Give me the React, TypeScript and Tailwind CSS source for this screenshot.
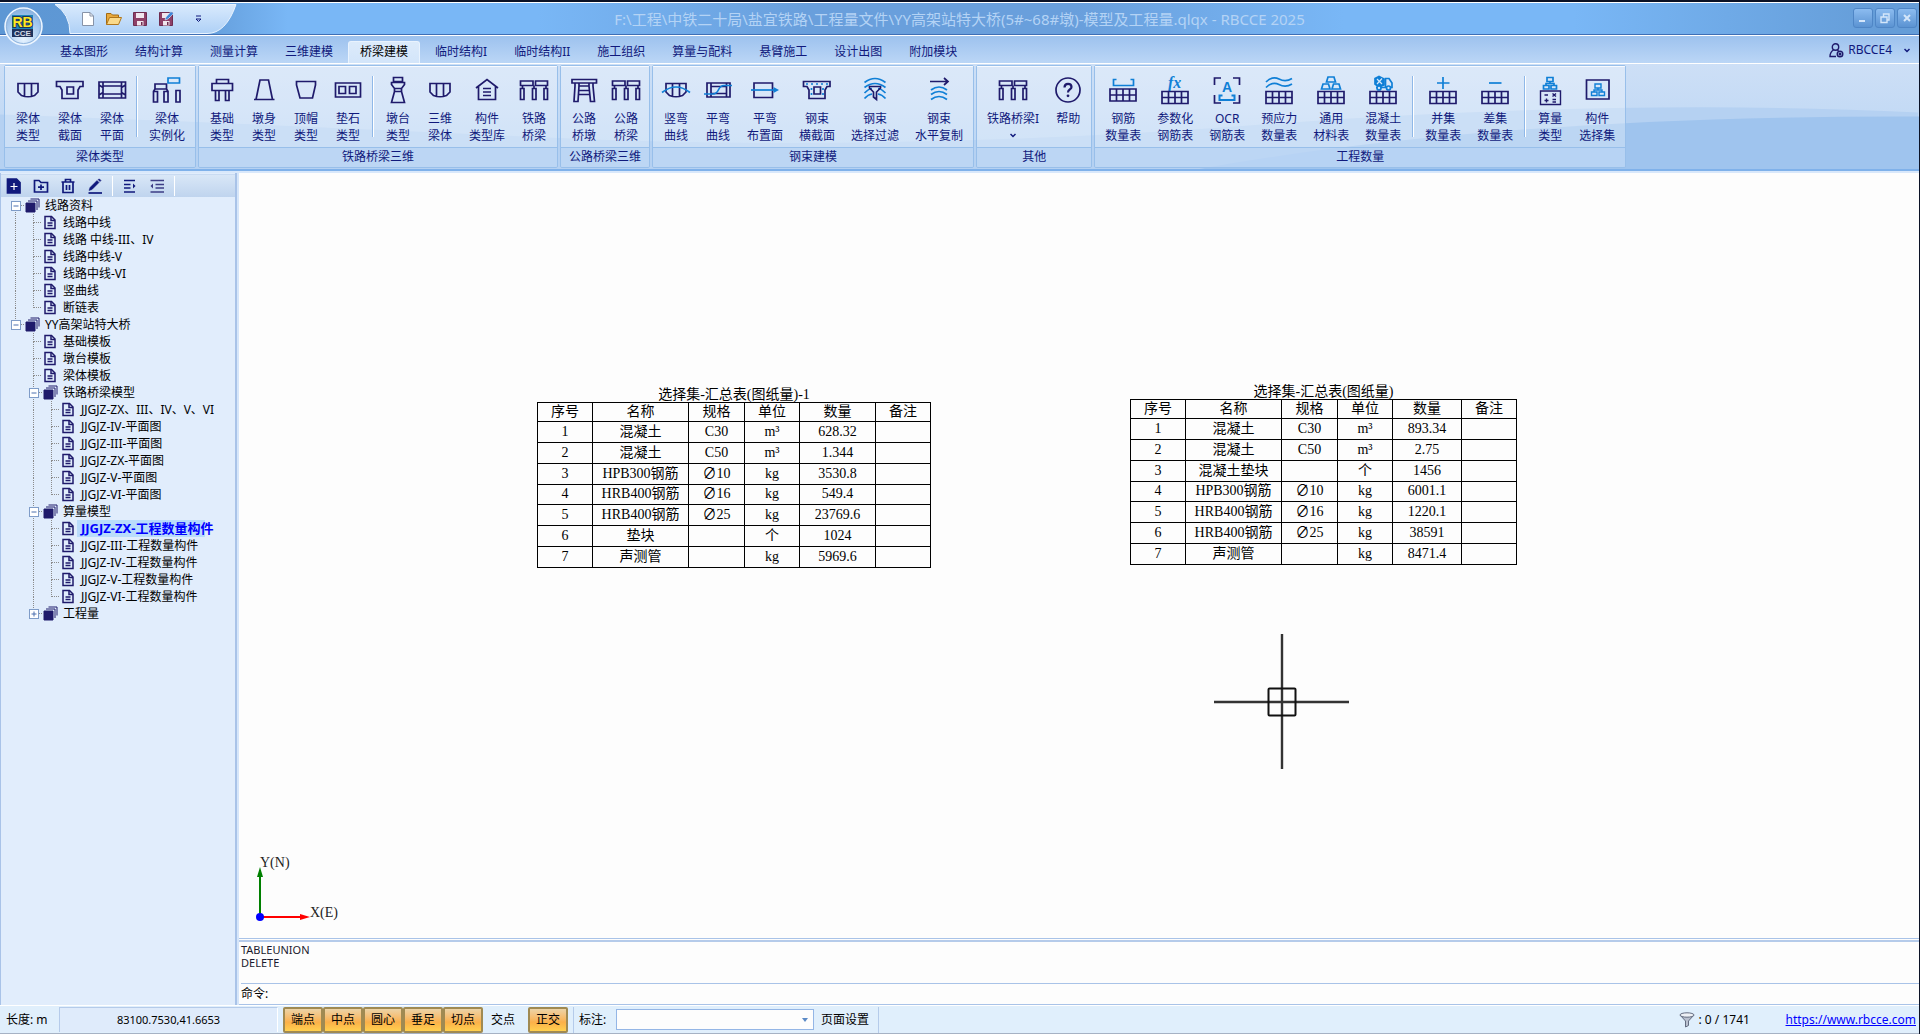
import React from 'react';
import clsx from 'clsx';

const INK = '#1f1a6b';
const BLUE = '#0f7fd6';

type IconProps = { children: React.ReactNode };

const Glyph = ({ children }: IconProps) => (
  <svg width="32" height="32" viewBox="0 0 32 32" fill="none" stroke={INK} strokeWidth="1.7" aria-hidden="true">
    {children}
  </svg>
);

const BEAM = 'M6 9.5H26V18L22.5 21.5Q16 24 9.5 21.5L6 18Z M12.5 9.5V22.5 M19.5 9.5V22.5';
const SECTION = 'M2.5 7.5H29V12.5H26L24 16V24.5H8V16L6 12.5H2.5Z M13 13H19.5V20H13Z';
const BRIDGE =
  'M2.5 7H15V11.5H2.5Z M17.5 7H29.5V11.5H17.5Z M4.5 11.5V14 M16 11.5V14 M28 11.5V14 M2.5 14.5H6V25.5H2.5Z M14.5 14.5H18V25.5H14.5Z M26 14.5H29.5V25.5H26Z';

const grid = (y: number) => (
  <path d={`M3 ${y}H29V${y + 12}H3Z M3 ${y + 6}H29 M9.5 ${y}V${y + 12} M16 ${y}V${y + 12} M22.5 ${y}V${y + 12}`} />
);

const ORG = 'M13 3.5H19V7.5H13Z M9.5 11.5H15V15H9.5Z M17 11.5H22.5V15H17Z M16 7.5V9.5 M12 11.5V9.5H20V11.5';

const icons: Record<string, React.ReactNode> = {
  beam: <path d={BEAM} />,
  section: <path d={SECTION} />,
  plane: <path d="M3 8H29.5V24H3Z M7 8V24 M25.5 8V24 M7 12H25.5 M7 20H25.5 M3 11L7 13.5 M3 21L7 18.5 M29.5 11L25.5 13.5 M29.5 21L25.5 18.5" />,
  instance: (
    <>
      <path d="M4 10H15.5V15H4Z M2.5 17.5L4 15M17 17.5L15.5 15 M2.5 17.5H6.5V28H2.5Z M13 17.5H17V28H13Z M25 16.5H29V28H25Z" />
      <path d="M17 4H28.5V9H17Z" stroke={BLUE} />
    </>
  ),
  foundation: <path d="M10.5 5.5H22.5V9.5H10.5Z M6 9.5H26.5V16.5H6Z M9.5 16.5V26.5H13V16.5 M19.5 16.5V26.5H23V16.5" />,
  pier: <path d="M8 25.5L12 6H20.5L24.5 25.5 M6 25.5H26.5" />,
  cap: <path d="M6.5 7.5H25.5V11L22.5 24H10L6.5 11Z" />,
  pad: <path d="M3.5 9H28.5V23H3.5Z M7 12.5H13.5V19.5H7Z M17.5 12.5H24V19.5H17.5Z" />,
  abutment: <path d="M11.5 3.5H20.5V7.5H11.5Z M9.5 8.5H22.5V10.5L19.5 14.5H12.5L9.5 10.5Z M12.5 17.5H19.5L22.5 28.5H9.5Z M12.5 14.5V17.5 M19.5 14.5V17.5" />,
  house: <path d="M5 14L16 5.5L27 14 M7.5 12.5V25.5H24.5V12.5 M12 14.5H20 M12 18H20 M12 21.5H20" />,
  bridge: <path d={BRIDGE} />,
  roadPier: <path d="M4 5.5H28.5V9H4Z M7 9V12L6 27.5H10L11 12V9 M21 9V12L22.5 27.5H26.5L25 12V9 M11 12H21 M10.5 16.5H21.5 M10.5 20.5H22" />,
  vCurve: (
    <>
      <path d={BEAM} />
      <path d="M2 18.5Q16 7.5 30 18.5" stroke={BLUE} />
    </>
  ),
  hCurve: (
    <>
      <path d="M5 9H28V23H5Z M9 9V23 M24.5 9V23 M9 12.5H24.5 M9 19.5H24.5" />
      <path d="M2 20H11C18 20 15 11.5 22 11.5H30" stroke={BLUE} />
    </>
  ),
  layout: (
    <>
      <path d="M5 9H23.5V23.5H5Z" />
      <path d="M2 16H27" stroke={BLUE} />
      <path d="M24.5 13L30 16L24.5 19Z" fill={BLUE} stroke="none" />
    </>
  ),
  crossSection: (
    <>
      <path d={SECTION} />
      <path d="M5 10H28" stroke={BLUE} strokeDasharray="2 3" />
      <path d="M10.5 14V23 M22 14V23" stroke={BLUE} strokeDasharray="2 3" />
    </>
  ),
  filter: (
    <>
      <path d="M5.5 8.5Q16 .5 26.5 8.5 M5.5 13.5Q16 5.5 26.5 13.5 M5.5 19Q10 14.5 13 14.5 M19 14.5Q22 14.5 26.5 19 M5.5 24.5Q9 20.5 13 20 M19 20Q23 20.5 26.5 24.5" stroke={BLUE} />
      <path d="M10.5 12.5H21.5V14L17.5 18V25.5L14.5 23V18L10.5 14Z" />
    </>
  ),
  copy: (
    <>
      <path d="M7 7.5H25 M21 4L25 7.5L21 11" />
      <path d="M8 16Q16 10 24 16 M8 20.5Q16 14.5 24 20.5 M8 25.5Q16 19.5 24 25.5" stroke={BLUE} />
    </>
  ),
  help: (
    <>
      <circle cx="16" cy="16" r="12" />
      <path d="M12.5 13.5C12.5 8.5 19.5 9 19.5 13C19.5 15.5 16 15.5 16 18.5" strokeWidth="2.2" />
      <circle cx="16" cy="21.8" r="1.4" fill={INK} stroke="none" />
    </>
  ),
  rebar: (
    <>
      <path d="M9.5 5.5H6.5V11.5H26.5V5.5H23.5" stroke={BLUE} />
      {grid(15)}
    </>
  ),
  fx: (
    <>
      <text x="9" y="14" fontSize="16" fontWeight="700" fontStyle="italic" fontFamily="Liberation Serif, serif" fill={BLUE} stroke="none">
        fx
      </text>
      {grid(17.5)}
    </>
  ),
  ocr: (
    <>
      <path d="M3.5 11V4H10 M22 4H28.5V11 M3.5 21V29H10 M22 29H28.5V21" />
      <path d="M11.5 21.5H8.5V26H23.5V21.5H20.5" stroke={BLUE} strokeWidth="2" />
      <text x="16" y="18" textAnchor="middle" fontSize="14" fontWeight="700" fontFamily="Liberation Sans, sans-serif" fill={BLUE} stroke="none">
        A
      </text>
    </>
  ),
  prestress: (
    <>
      <path d="M3 8Q9.5 1.5 16 5Q22.5 8.5 29 4.5 M3 13.5Q9.5 7 16 10.5Q22.5 14 29 10" stroke={BLUE} />
      {grid(17.5)}
    </>
  ),
  material: (
    <>
      <path d="M13 3H19L20.5 8H11.5Z M8 10H13.5L15 15H6.5Z M18.5 10H24L25.5 15H17Z" stroke={BLUE} />
      {grid(17.5)}
    </>
  ),
  concrete: (
    <>
      <path d="M8 4.5L12 2.5L17 5V11L12 13L8 10Z" fill={BLUE} stroke={BLUE} />
      <path d="M10 5L15 10 M15 4.5L10 10" stroke="#d5e7fa" strokeWidth="1.2" />
      <path d="M18.5 13.5V4.5H22L25 9V13.5H9" stroke={BLUE} />
      <circle cx="12" cy="14" r="2" fill="#d5e7fa" stroke={BLUE} />
      <circle cx="21.5" cy="14" r="2" fill="#d5e7fa" stroke={BLUE} />
      {grid(17.5)}
    </>
  ),
  union: (
    <>
      <path d="M10 9H22.5 M16 3V15" stroke={BLUE} />
      {grid(17.5)}
    </>
  ),
  diff: (
    <>
      <path d="M10 9H22.5" stroke={BLUE} />
      {grid(17.5)}
    </>
  ),
  calc: (
    <>
      <path d={ORG} stroke={BLUE} />
      <path d="M6.5 17H26.5V30.5H6.5Z M10.5 21H14 M10.5 26.5H14.5 M12.5 24.5V28.5 M18.5 19.5L22 22.5 M22 19.5L18.5 22.5 M18.5 25.5H22 M18.5 28H22" strokeWidth="1.4" />
    </>
  ),
  pick: (
    <>
      <path d="M5.5 6H28V25H5.5Z" />
      <g transform="translate(1 6.5)">
        <path d={ORG} stroke={BLUE} strokeWidth="1.4" />
      </g>
    </>
  ),
};

interface RibbonItem {
  icon: string;
  lines: [string, string?];
  drop?: boolean;
}

interface RibbonGroup {
  title: string;
  items: (RibbonItem | '|')[];
}

const ribbon: RibbonGroup[] = [
  {
    title: '梁体类型',
    items: [
      { icon: 'beam', lines: ['梁体', '类型'] },
      { icon: 'section', lines: ['梁体', '截面'] },
      { icon: 'plane', lines: ['梁体', '平面'] },
      '|',
      { icon: 'instance', lines: ['梁体', '实例化'] },
    ],
  },
  {
    title: '铁路桥梁三维',
    items: [
      { icon: 'foundation', lines: ['基础', '类型'] },
      { icon: 'pier', lines: ['墩身', '类型'] },
      { icon: 'cap', lines: ['顶帽', '类型'] },
      { icon: 'pad', lines: ['垫石', '类型'] },
      '|',
      { icon: 'abutment', lines: ['墩台', '类型'] },
      { icon: 'beam', lines: ['三维', '梁体'] },
      { icon: 'house', lines: ['构件', '类型库'] },
      { icon: 'bridge', lines: ['铁路', '桥梁'] },
    ],
  },
  {
    title: '公路桥梁三维',
    items: [
      { icon: 'roadPier', lines: ['公路', '桥墩'] },
      { icon: 'bridge', lines: ['公路', '桥梁'] },
    ],
  },
  {
    title: '钢束建模',
    items: [
      { icon: 'vCurve', lines: ['竖弯', '曲线'] },
      { icon: 'hCurve', lines: ['平弯', '曲线'] },
      { icon: 'layout', lines: ['平弯', '布置面'] },
      { icon: 'crossSection', lines: ['钢束', '横截面'] },
      { icon: 'filter', lines: ['钢束', '选择过滤'] },
      { icon: 'copy', lines: ['钢束', '水平复制'] },
    ],
  },
  {
    title: '其他',
    items: [
      { icon: 'bridge', lines: ['铁路桥梁I'], drop: true },
      { icon: 'help', lines: ['帮助'] },
    ],
  },
  {
    title: '工程数量',
    items: [
      { icon: 'rebar', lines: ['钢筋', '数量表'] },
      { icon: 'fx', lines: ['参数化', '钢筋表'] },
      { icon: 'ocr', lines: ['OCR', '钢筋表'] },
      { icon: 'prestress', lines: ['预应力', '数量表'] },
      { icon: 'material', lines: ['通用', '材料表'] },
      { icon: 'concrete', lines: ['混凝土', '数量表'] },
      '|',
      { icon: 'union', lines: ['并集', '数量表'] },
      { icon: 'diff', lines: ['差集', '数量表'] },
      '|',
      { icon: 'calc', lines: ['算量', '类型'] },
      { icon: 'pick', lines: ['构件', '选择集'] },
    ],
  },
];

const tabs = ['基本图形', '结构计算', '测量计算', '三维建模', '桥梁建模', '临时结构I', '临时结构II', '施工组织', '算量与配料', '悬臂施工', '设计出图', '附加模块'];
const ACTIVE_TAB = '桥梁建模';

// one letter per indent cell: ' ' empty, 'v' line through, 't' branch, 'e' last branch,
// 'f' first root, 'l' last root, 'm' open node, 'p' closed node
interface TreeRow {
  guides: string;
  label: string;
  folder?: boolean;
  selected?: boolean;
}

const tree: TreeRow[] = [
  { guides: 'f', label: '线路资料', folder: true },
  { guides: 'vt', label: '线路中线' },
  { guides: 'vt', label: '线路 中线-III、IV' },
  { guides: 'vt', label: '线路中线-V' },
  { guides: 'vt', label: '线路中线-VI' },
  { guides: 'vt', label: '竖曲线' },
  { guides: 've', label: '断链表' },
  { guides: 'l', label: 'YY高架站特大桥', folder: true },
  { guides: ' t', label: '基础模板' },
  { guides: ' t', label: '墩台模板' },
  { guides: ' t', label: '梁体模板' },
  { guides: ' m', label: '铁路桥梁模型', folder: true },
  { guides: ' vt', label: 'JJGJZ-ZX、III、IV、V、VI' },
  { guides: ' vt', label: 'JJGJZ-IV-平面图' },
  { guides: ' vt', label: 'JJGJZ-III-平面图' },
  { guides: ' vt', label: 'JJGJZ-ZX-平面图' },
  { guides: ' vt', label: 'JJGJZ-V-平面图' },
  { guides: ' ve', label: 'JJGJZ-VI-平面图' },
  { guides: ' m', label: '算量模型', folder: true },
  { guides: ' vt', label: 'JJGJZ-ZX-工程数量构件', selected: true },
  { guides: ' vt', label: 'JJGJZ-III-工程数量构件' },
  { guides: ' vt', label: 'JJGJZ-IV-工程数量构件' },
  { guides: ' vt', label: 'JJGJZ-V-工程数量构件' },
  { guides: ' ve', label: 'JJGJZ-VI-工程数量构件' },
  { guides: ' p', label: '工程量', folder: true },
];

const head = ['序号', '名称', '规格', '单位', '数量', '备注'];

const summaryA = [
  ['1', '混凝土', 'C30', 'm³', '628.32', ''],
  ['2', '混凝土', 'C50', 'm³', '1.344', ''],
  ['3', 'HPB300钢筋', '∅10', 'kg', '3530.8', ''],
  ['4', 'HRB400钢筋', '∅16', 'kg', '549.4', ''],
  ['5', 'HRB400钢筋', '∅25', 'kg', '23769.6', ''],
  ['6', '垫块', '', '个', '1024', ''],
  ['7', '声测管', '', 'kg', '5969.6', ''],
];

const summaryB = [
  ['1', '混凝土', 'C30', 'm³', '893.34', ''],
  ['2', '混凝土', 'C50', 'm³', '2.75', ''],
  ['3', '混凝土垫块', '', '个', '1456', ''],
  ['4', 'HPB300钢筋', '∅10', 'kg', '6001.1', ''],
  ['5', 'HRB400钢筋', '∅16', 'kg', '1220.1', ''],
  ['6', 'HRB400钢筋', '∅25', 'kg', '38591', ''],
  ['7', '声测管', '', 'kg', '8471.4', ''],
];

const Chevron = () => (
  <svg width="6" height="5" viewBox="0 0 6 5" fill="none" stroke="#10197c" strokeWidth="1.5" aria-hidden="true">
    <path d="M.5 1L3 3.5L5.5 1" />
  </svg>
);

const QuickAccess = () => (
  <div className="relative flex h-[30px] w-[184px] items-center pl-[27px]">
    <svg className="absolute inset-0" width="184" height="30" viewBox="0 0 184 30" aria-hidden="true">
      <defs>
        <linearGradient id="qa" x1="0" y1="0" x2="0" y2="1">
          <stop offset="0" stopColor="#d9eafd" />
          <stop offset="1" stopColor="#aed0f6" />
        </linearGradient>
      </defs>
      <path d="M2 .5H183Q173 29.5 154 29.5H17Q17 10 2 .5Z" fill="url(#qa)" stroke="#eaf4ff" />
    </svg>
    <div className="relative flex items-center gap-[10px]">
      <button aria-label="新建" className="h-4 w-4">
        <svg width="16" height="16" viewBox="0 0 16 16"><path d="M2.5 1.5H10L13.5 5V14.5H2.5Z" fill="#fff" stroke="#8793a8" /><path d="M10 1.5V5H13.5" fill="none" stroke="#8793a8" /></svg>
      </button>
      <button aria-label="打开" className="h-4 w-4">
        <svg width="16" height="16" viewBox="0 0 16 16"><path d="M.5 13.5V2.5H5L6.5 4H12.5V6.5" fill="#e8a93c" stroke="#a36a12" /><path d="M.5 13.5L3.5 6.5H15.5L12.5 13.5Z" fill="#fad98a" stroke="#b0761b" /></svg>
      </button>
      <button aria-label="保存" className="h-4 w-4">
        <svg width="16" height="16" viewBox="0 0 16 16"><path d="M1.5 1.5H14.5V14.5H1.5Z" fill="#8e4068" stroke="#6f2c50" /><path d="M4 2H12V7H4Z M5 10H11.5V14.5H5Z" fill="#f1e6ee" /><path d="M9 11H10.5V14H9Z" fill="#6f2c50" /></svg>
      </button>
      <button aria-label="另存为" className="h-4 w-4">
        <svg width="16" height="16" viewBox="0 0 16 16"><path d="M1.5 1.5H14.5V14.5H1.5Z" fill="#8e4068" stroke="#6f2c50" /><path d="M4 2H12V7H4Z M5 10H11.5V14.5H5Z" fill="#f1e6ee" /><path d="M9 11H10.5V14H9Z" fill="#6f2c50" /><path d="M7 9L8 6L13 .5L15.5 2.5L10 8Z" fill="#3f86d8" stroke="#dcebfb" strokeWidth=".6" /></svg>
      </button>
      <button aria-label="自定义快速访问工具栏" className="ml-[6px] flex h-4 w-4 items-center justify-center">
        <svg width="7" height="8" viewBox="0 0 7 8" fill="none" stroke="#10197c"><path d="M1 1H6 M1 4L3.5 6.5L6 4Z" /></svg>
      </button>
    </div>
  </div>
);

const winButton = 'flex h-5 w-5 items-center justify-center rounded-[3px] border border-[#4f86c6] bg-linear-to-b from-[#8cbcf0] to-[#5b93d2] text-[#d4e6fa]';

const TitleBar = () => (
  <div className="relative flex h-[35px] items-start justify-between border-t-2 border-b border-t-[#0b1226] border-b-[#3f6fb5]">
    <div className="absolute inset-0 border-t border-white bg-[linear-gradient(90deg,#5d97d4_0%,#6099d6_10%,#79b7f6_15%,#79b7f6_28%,#699fdc_42%,#699fdc_56%,#79b7f6_70%,#79b7f6_82%,#659dd8_98%)]" />
    <div className="relative ml-[53px] pt-[2px]">
      <QuickAccess />
    </div>
    <h1 className="absolute inset-x-0 top-[6px] text-center text-[15px] leading-[22px] text-[#b4d3f5]">
      F:\工程\中铁二十局\盐宜铁路\工程量文件\YY高架站特大桥(5#~68#墩)-模型及工程量.qlqx - RBCCE 2025
    </h1>
    <div className="relative flex gap-[2px] pt-[6px] pr-[2px]">
      <button aria-label="最小化" className={winButton}>
        <svg width="12" height="12" viewBox="0 0 12 12" stroke="currentColor" strokeWidth="2"><path d="M2 9H8" /></svg>
      </button>
      <button aria-label="还原" className={winButton}>
        <svg width="12" height="12" viewBox="0 0 12 12" fill="none" stroke="currentColor" strokeWidth="1.4"><path d="M2 5H8V10.5H2Z M4.5 5V2H10V8H8" /></svg>
      </button>
      <button aria-label="关闭" className={winButton}>
        <svg width="12" height="12" viewBox="0 0 12 12" stroke="currentColor" strokeWidth="2"><path d="M3 3L9 9 M9 3L3 9" /></svg>
      </button>
    </div>
  </div>
);

const AppOrb = () => (
  <button aria-label="应用菜单" className="absolute top-[7px] left-1 z-10 h-[39px] w-[39px]">
    <svg width="39" height="39" viewBox="0 0 39 39">
      <defs>
        <radialGradient id="orb" cx=".5" cy=".85" r=".9">
          <stop offset="0" stopColor="#e6f3ff" />
          <stop offset=".6" stopColor="#a3c7ee" />
          <stop offset="1" stopColor="#7fabdc" />
        </radialGradient>
      </defs>
      <circle cx="19.5" cy="19.5" r="18.5" fill="url(#orb)" stroke="#eef6ff" strokeWidth="1.5" />
      <circle cx="19.5" cy="19.5" r="17" fill="none" stroke="#8fb4de" />
      <rect x="8" y="8" width="21" height="14" fill="#1e86b8" />
      <rect x="8" y="22" width="21" height="8" fill="#20335c" />
      <text x="18.5" y="20" textAnchor="middle" fontSize="14" fontWeight="700" fontFamily="Liberation Sans, sans-serif" fill="#ffe81f" stroke="#20335c" strokeWidth="2" paintOrder="stroke">RB</text>
      <text x="18.5" y="29" textAnchor="middle" fontSize="8" fontWeight="700" fontFamily="Liberation Sans, sans-serif" fill="#d5dce8">CCE</text>
    </svg>
  </button>
);

const TabBar = () => (
  <div className="flex h-7 items-end justify-between border-t border-white bg-linear-to-b from-[#9dc2ee] to-[#bbd6f6]">
    <div className="flex h-[22px] gap-[3px] pl-12" role="tablist">
      {tabs.map(tab => (
        <button
          key={tab}
          role="tab"
          aria-selected={tab === ACTIVE_TAB}
          className={clsx(
            'border-x border-t px-[11px] pb-[2px] text-xs leading-[18px] whitespace-nowrap',
            tab === ACTIVE_TAB ? 'rounded-t-[3px] border-[#e9f3fe] bg-linear-to-b from-[#dcebfb] to-[#d3e5fa] text-black' : 'border-transparent text-[#10197c]'
          )}
        >
          {tab}
        </button>
      ))}
    </div>
    <button className="flex h-[26px] items-center gap-1 pr-[9px] text-xs text-[#10197c]">
      <svg width="15" height="15" viewBox="0 0 15 15" fill="none" stroke={INK} strokeWidth="1.4" aria-hidden="true">
        <circle cx="6.5" cy="4" r="3.2" />
        <path d="M4.5 7C2 8.5 1 10.5 1 13.5H7 M8.5 7L9.5 8" />
        <circle cx="11" cy="11" r="2.8" />
        <circle cx="11" cy="11" r=".8" />
      </svg>
      RBCCE4
      <span className="pl-2"><Chevron /></span>
    </button>
  </div>
);

const RibbonButton = ({ icon, lines, drop }: RibbonItem) => (
  <button className="flex flex-col items-center px-[5px] pt-[7px]">
    <Glyph>{icons[icon]}</Glyph>
    <span className="mt-1 px-[3px] text-xs leading-[17px] whitespace-nowrap">{lines[0]}</span>
    <span className="flex h-[17px] items-center px-[3px] text-xs leading-[17px] whitespace-nowrap">{drop ? <Chevron /> : lines[1]}</span>
  </button>
);

const Ribbon = () => (
  <div className="relative h-[108px] border-t border-b-2 border-white border-b-[#7fb1ea] bg-linear-to-b from-[#cddff6] to-[#b9d5f4] px-1">
    <svg className="absolute inset-0 h-full w-full" viewBox="0 0 1920 106" preserveAspectRatio="none" aria-hidden="true">
      <path d="M0 51Q200 58 540 74T1250 62T1919 49V106H0Z" fill="#b5d1f2" />
      <path d="M1200 106Q1500 52 1920 53V106Z" fill="#9fc4ee" />
    </svg>
    <div className="relative flex gap-[2px] pt-px text-[#10197c]">
      {ribbon.map(group => (
        <section key={group.title} aria-label={group.title} className="rounded-[2px] border border-[#98bfea] bg-white/30">
          <div className="flex h-[81px] border-t border-white/80 px-[2px]">
            {group.items.map((item, i) =>
              item === '|' ? (
                <span key={i} className="mx-[3px] mt-[9px] h-[61px] w-[2px] border-r border-l border-r-white border-l-[#8fb8e8]" />
              ) : (
                <RibbonButton key={i} {...item} />
              )
            )}
          </div>
          <h2 className="h-5 border-t border-[#98bfea] bg-[#b5d2f3]/70 text-center text-xs leading-[18px]">{group.title}</h2>
        </section>
      ))}
    </div>
  </div>
);

const GuideCell = ({ kind }: { kind: string }) => {
  const toggle = 'flmp'.includes(kind);
  const down = 'vtfm'.includes(kind);
  const up = 'vtelmp'.includes(kind);
  return (
    <svg width="18" height="17" viewBox="0 0 18 17" fill="none" stroke="#8b8b8b" strokeDasharray="1 1" aria-hidden="true">
      {up && <path d="M8.5 0V9" />}
      {down && <path d="M8.5 9V17" />}
      {'te'.includes(kind) && <path d="M9 8.5H17" />}
      {toggle && (
        <>
          <path d="M14 8.5H18" />
          <rect x="4.5" y="4.5" width="9" height="9" fill="#fff" stroke="#7f9cc8" strokeDasharray="none" />
          <path d={kind === 'p' ? 'M6.5 9H11.5 M9 6.5V11.5' : 'M6.5 9H11.5'} stroke="#4a6fae" strokeDasharray="none" />
        </>
      )}
    </svg>
  );
};

const FolderIcon = () => (
  <svg width="15" height="15" viewBox="0 0 15 15" fill="none" stroke={INK} aria-hidden="true">
    <path d="M1 5H10V14H1Z" fill={INK} />
    <path d="M3 3H12V12 M5.5 1H14V9.5" />
  </svg>
);

const DocIcon = () => (
  <svg width="15" height="15" viewBox="0 0 15 15" fill="none" stroke={INK} strokeWidth="1.5" aria-hidden="true">
    <path d="M2 1.5H8.5L12 5V13.5H2Z" />
    <path d="M8 1.5V5.5H12 M4.5 8H9.5 M4.5 10.5H9.5" />
  </svg>
);

const toolIcons: { name: string; icon: React.ReactNode }[] = [
  { name: '新建文件', icon: <><path d="M1.5 1H10.5L14 4.5V15H1.5Z" fill="#10197c" stroke="#10197c" /><path d="M8 5V12 M4.5 8.5H11.5" stroke="#fff" strokeWidth="1.2" /></> },
  { name: '新建文件夹', icon: <path d="M1.5 2.5H6L8 4.5H14.5V14H1.5Z M8 6.5V12 M5 9.2H11" /> },
  { name: '删除', icon: <path d="M1.5 4H14.5 M5.5 4V1.5H10.5V4 M3 4V14.5H13V4 M6.5 7V12 M9.5 7V12" /> },
  { name: '重命名', icon: <><path d="M1.5 15H15" /><path d="M2 12.5L3 9.5L10 2.5L12 4.5L5 11.5Z M11 1.5L12.5 1L14 2.5L13 3.5Z" fill="#10197c" strokeWidth=".5" /></> },
];

const SidePanel = () => (
  <aside className="flex w-[237px] shrink-0 flex-col border-l border-r-2 border-[#a9c3e8] bg-[#e1edfc] pt-px text-xs">
    <div className="flex h-[23px] shrink-0 items-center gap-[11px] border-t border-[#c9dbf2] bg-linear-to-b from-[#d9e7f7] to-[#bfd4ee] pl-[5px]">
      {toolIcons.map(tool => (
        <button key={tool.name} aria-label={tool.name} className="h-4 w-4">
          <svg width="16" height="16" viewBox="0 0 16 16" fill="none" stroke="#10197c" strokeWidth="1.7">{tool.icon}</svg>
        </button>
      ))}
      <span className="-mx-[2px] h-5 w-px bg-white" />
      <button aria-label="展开" className="h-4 w-4">
        <svg width="16" height="16" viewBox="0 0 16 16" fill="none" stroke="#10197c" strokeWidth="1.7"><path d="M2 2.5H13 M2 6.5H8.5 M2 10H8.5 M2 14H13" /><path d="M11 5.5L13.5 8L11 10.5Z" fill="#10197c" stroke="none" /></svg>
      </button>
      <button aria-label="折叠" className="h-4 w-4">
        <svg width="16" height="16" viewBox="0 0 16 16" fill="none" stroke="#3d3d85" strokeWidth="1.7"><path d="M1.5 2.5H15 M6.5 6.5H15 M6.5 10H15 M1.5 14H15" /><path d="M4 5.5L1.5 8L4 10.5Z" fill="#3d3d85" stroke="none" /></svg>
      </button>
      <span className="-mx-[2px] h-5 w-px bg-white" />
    </div>
    <ul className="flex-1 pl-[6px] text-black">
      {tree.map(row => (
        <li key={row.label} className="flex h-[17px] items-center">
          {row.guides.split('').map((kind, i) => (
            <GuideCell key={i} kind={kind} />
          ))}
          {row.folder ? <FolderIcon /> : <DocIcon />}
          <span className={clsx('ml-px h-[17px] pl-1 leading-[17px] whitespace-nowrap', row.selected && 'w-[128px] bg-[#b9dcfb] text-[13px] font-bold text-[#0000ff]')}>
            {row.label}
          </span>
        </li>
      ))}
    </ul>
  </aside>
);

interface SummaryTableProps {
  title: string;
  rows: string[][];
  className: string;
  widths: string[];
}

const SummaryTable = ({ title, rows, className, widths }: SummaryTableProps) => (
  <table className={clsx('absolute h-[166px] table-fixed border-collapse text-center font-["Liberation_Serif","Noto_Sans_CJK_SC",serif] text-sm leading-[18px] text-black', className)}>
    <caption className="h-[15px] leading-[15px] whitespace-nowrap">{title}</caption>
    <colgroup>
      {widths.map((w, i) => (
        <col key={i} className={w} />
      ))}
    </colgroup>
    <thead>
      <tr>
        {head.map(h => (
          <th key={h} className="border border-black p-0 font-normal">{h}</th>
        ))}
      </tr>
    </thead>
    <tbody>
      {rows.map(row => (
        <tr key={row[0]}>
          {row.map((cell, i) => (
            <td key={i} className="border border-black p-0 whitespace-nowrap">{cell}</td>
          ))}
        </tr>
      ))}
    </tbody>
  </table>
);

const Canvas = () => (
  <div className="relative flex-1 overflow-hidden bg-[#fdfdfd]">
    <SummaryTable title="选择集-汇总表(图纸量)-1" rows={summaryA} className="top-[214px] left-[298px] w-[394px]" widths={['w-[55px]', 'w-[96px]', 'w-[56px]', 'w-[55px]', 'w-[76px]', 'w-[55px]']} />
    <SummaryTable title="选择集-汇总表(图纸量)" rows={summaryB} className="top-[211px] left-[891px] w-[387px]" widths={['w-[55px]', 'w-[96px]', 'w-[56px]', 'w-[55px]', 'w-[69px]', 'w-[55px]']} />
    <svg className="absolute top-[461px] left-[975px]" width="136" height="136" viewBox="0 0 136 136" fill="none" stroke="#333" aria-hidden="true">
      <path d="M0 68H135 M68 0V135" strokeWidth="2.4" />
      <rect x="54.5" y="54.5" width="27" height="27" rx="1" stroke="#111" strokeWidth="2" />
    </svg>
    <svg className="absolute bottom-2 left-[13px] font-['Liberation_Serif',serif] text-sm" width="100" height="80" viewBox="0 0 100 80" aria-label="坐标系">
      <path d="M8 67V20" stroke="#008000" strokeWidth="2" />
      <path d="M8 17L11 27H5Z" fill="#008000" />
      <path d="M8 67H52" stroke="#f00" strokeWidth="2" />
      <path d="M58 67L48 64V70Z" fill="#f00" />
      <circle cx="8" cy="67" r="4" fill="#00f" />
      <text x="8" y="17" fill="#222">Y(N)</text>
      <text x="58" y="67" fill="#222">X(E)</text>
    </svg>
  </div>
);

const CommandPanel = () => (
  <div className="shrink-0 border-y border-[#a9c3e8] bg-[#fdfdfd] text-black">
    <div className="mt-px border-t-2 border-[#b5cbea] pl-[2px]">
      <div className="h-[42px] border-b border-[#a9c3e8] pt-px text-[11px] leading-[13px] text-[#1a1a2e]">
        <p>TABLEUNION</p>
        <p>DELETE</p>
      </div>
      <div className="flex h-5 items-center text-xs">
        <label htmlFor="command">命令:</label>
        <input id="command" className="ml-1 h-4 flex-1 bg-transparent outline-none" />
      </div>
    </div>
  </div>
);

const SnapButton = ({ label, on = true }: { label: string; on?: boolean }) => (
  <button
    aria-pressed={on}
    className={clsx(
      'h-[26px] w-10 rounded-[2px] border text-xs leading-[20px] text-black',
      on ? 'border-2 border-[#a08a52] bg-linear-to-b from-[#ecd3a6] via-[#fbb049] via-60% to-[#ffd04f]' : 'border-transparent'
    )}
  >
    {label}
  </button>
);

const StatusBar = () => (
  <footer className="flex h-[29px] shrink-0 items-center border-t border-b border-t-white border-b-[#a6b2c4] bg-[#e0effc] text-xs text-black">
    <span className="w-[59px] pl-[6px] whitespace-nowrap">长度: m</span>
    <output className="h-[25px] w-[219px] border-t border-r border-l border-t-[#b5cbea] border-r-white border-l-[#b5cbea] bg-[#dfebfb] text-center text-[11px] leading-[23px]">83100.7530,41.6653</output>
    <div className="ml-[5px] flex">
      {['端点', '中点', '圆心', '垂足', '切点'].map(label => (
        <SnapButton key={label} label={label} />
      ))}
      <SnapButton label="交点" on={false} />
    </div>
    <span className="ml-[5px] flex"><SnapButton label="正交" /></span>
    <span className="mx-[5px] h-[26px] w-px bg-[#b5cbea]" />
    <label htmlFor="dim" className="w-[37px] whitespace-nowrap">标注:</label>
    <div className="relative h-[21px] w-[198px]">
      <select id="dim" className="h-full w-full appearance-none border border-[#94b6e6] bg-[#fdfdfd] px-1 outline-none">
        <option></option>
      </select>
      <svg className="pointer-events-none absolute top-[9px] right-[6px]" width="6" height="4" viewBox="0 0 6 4" aria-hidden="true"><path d="M0 0H6L3 4Z" fill="#5b8ac6" /></svg>
    </div>
    <button className="ml-[6px] w-[50px] whitespace-nowrap">页面设置</button>
    <span className="ml-2 h-[26px] w-px bg-[#b5cbea]" />
    <div className="ml-auto flex items-center pr-[3px]">
      <svg width="16" height="16" viewBox="0 0 16 16" aria-hidden="true">
        <path d="M1 3L6.5 9V15L9.5 13.5V9L15 3Z" fill="#b9c0cf" stroke="#636c80" />
        <ellipse cx="8" cy="3" rx="7" ry="2.2" fill="#eef1f6" stroke="#636c80" />
      </svg>
      <span className="ml-1 w-[87px] whitespace-nowrap">: 0 / 1741</span>
      <a href="https://www.rbcce.com" className="whitespace-nowrap text-[#0000ff] underline">https://www.rbcce.com</a>
    </div>
  </footer>
);

const App: React.FC = () => (
  <div className="flex h-screen min-h-[700px] flex-col border-r border-[#0b1226] bg-[#d6e6fa] font-['Noto_Sans','Noto_Sans_CJK_SC',sans-serif]">
    <header className="relative shrink-0">
      <TitleBar />
      <TabBar />
      <Ribbon />
      <AppOrb />
    </header>
    <main className="flex min-h-0 flex-1 border-t-2 border-[#d9e8fb]">
      <SidePanel />
      <div className="ml-[2px] flex min-w-0 flex-1 flex-col">
        <Canvas />
        <CommandPanel />
      </div>
    </main>
    <StatusBar />
  </div>
);

export default App;
